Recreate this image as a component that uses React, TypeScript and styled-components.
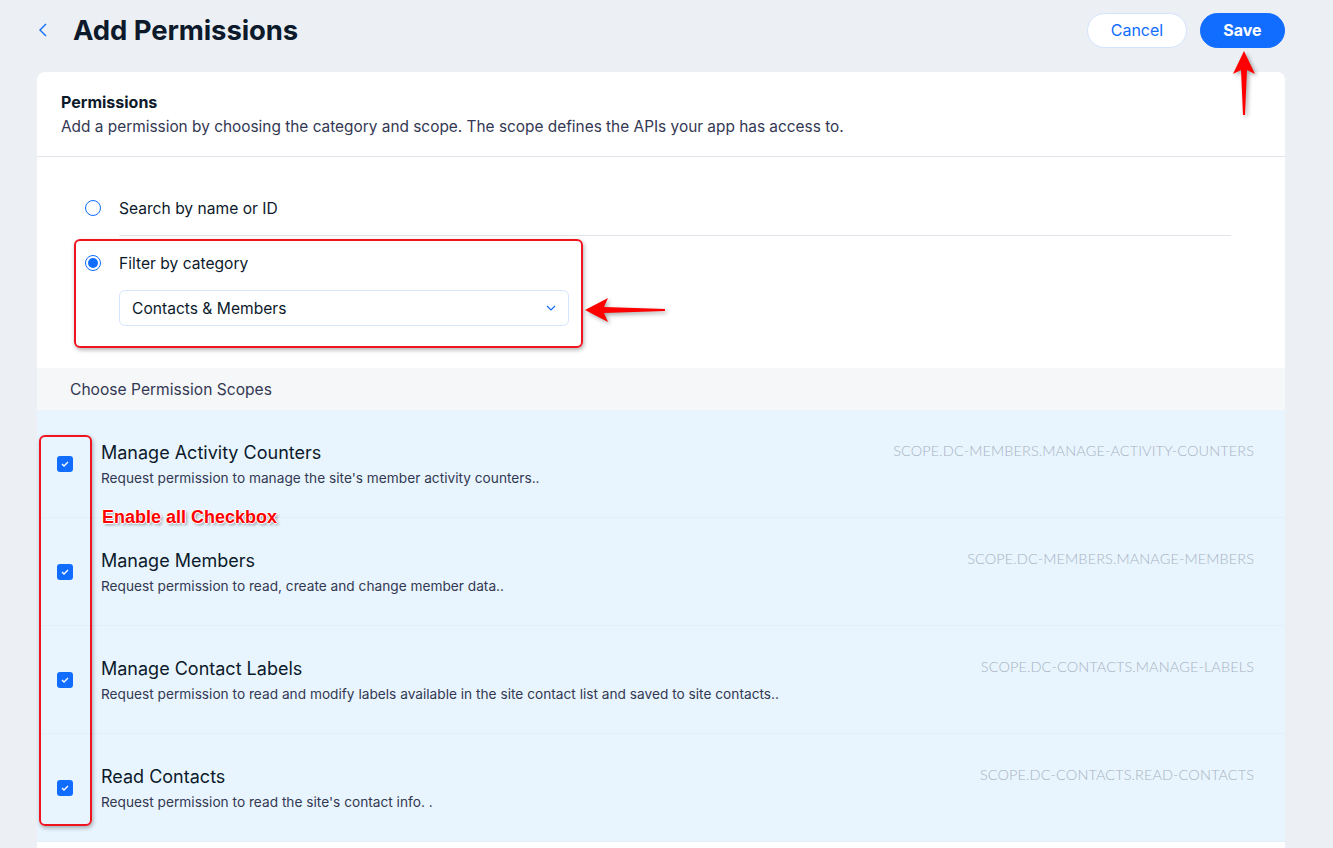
import React from 'react';
import styled, { createGlobalStyle } from 'styled-components';

const GlobalStyle = createGlobalStyle`
  html, body {
    margin: 0;
    padding: 0;
    background: #ecf0f4;
    font-family: Inter, "Noto Sans", sans-serif;
    color: #0c1a2b;
  }
  * { box-sizing: border-box; }
`;

const Page = styled.div`
  position: relative;
  width: 1333px;
  height: 848px;
  overflow: hidden;
  padding: 0 48px 0 37px;
`;

const Header = styled.header`
  display: flex;
  align-items: center;
  height: 60px;
`;

const BackButton = styled.button`
  display: flex;
  align-items: center;
  justify-content: center;
  width: 12px;
  height: 20px;
  padding: 0;
  border: none;
  background: none;
  color: #116dff;
`;

const Title = styled.h1`
  margin: 0 0 0 24px;
  font-size: 27.5px;
  font-weight: 700;
  letter-spacing: -0.1px;
  color: #0c1a2b;
  flex: 1;
`;

const Actions = styled.div`
  display: flex;
  gap: 13px;
`;

const PillButton = styled.button<{ $primary?: boolean }>`
  height: 35px;
  padding: 0 ${(p) => (p.$primary ? '22.5px' : '22.5px')};
  border-radius: 18px;
  font-family: Inter, "Noto Sans", sans-serif;
  font-size: 16px;
  font-weight: ${(p) => (p.$primary ? 700 : 400)};
  border: 1px solid ${(p) => (p.$primary ? '#116dff' : '#d3e3fd')};
  background: ${(p) => (p.$primary ? '#116dff' : '#ffffff')};
  color: ${(p) => (p.$primary ? '#ffffff' : '#116dff')};
`;

const Card = styled.section`
  margin-top: 12px;
  background: #ffffff;
  border-radius: 8px 8px 0 0;
  min-height: 800px;
`;

const CardHeader = styled.div`
  padding: 18px 24px 19px;
  border-bottom: 1px solid #dfe5eb;
`;

const CardTitle = styled.h2`
  margin: 0;
  font-size: 16px;
  line-height: 24px;
  font-weight: 700;
`;

const CardSubtitle = styled.p`
  margin: 3px 0 0;
  font-size: 15.4px;
  line-height: 20px;
  color: #333853;
`;

const Options = styled.div`
  padding: 31px 54px 42px 48px;
`;

const OptionRow = styled.label`
  display: flex;
  align-items: center;
  gap: 18px;
  height: 40px;
  font-size: 15.6px;
  color: #0c1a2b;
`;

const Radio = styled.span<{ $checked?: boolean }>`
  width: 16px;
  height: 16px;
  border-radius: 50%;
  border: 1px solid #116dff;
  display: flex;
  align-items: center;
  justify-content: center;
  background: #ffffff;
  &::after {
    content: '';
    width: 10px;
    height: 10px;
    border-radius: 50%;
    background: ${(p) => (p.$checked ? '#116dff' : 'transparent')};
  }
`;

const Divider = styled.hr`
  margin: 7px 0 7px 34px;
  border: none;
  border-top: 1px solid #dfe5eb;
`;

const Select = styled.div`
  margin: 7px 0 0 34px;
  width: 450px;
  height: 36px;
  border: 1px solid #d6e6fe;
  border-radius: 6px;
  display: flex;
  align-items: center;
  justify-content: space-between;
  padding: 0 12px 0 12px;
  font-size: 15.6px;
  color: #0c1a2b;
`;

const SectionBar = styled.div`
  height: 42px;
  display: flex;
  align-items: center;
  padding-left: 33px;
  background: #f6f7f9;
  font-size: 15.6px;
  color: #333853;
`;

const ScopeList = styled.div`
  background: #e8f5fe;
`;

const ScopeRow = styled.div`
  display: flex;
  height: 108px;
  padding: 31px 31px 0 20px;
  border-bottom: 1px solid #e1eff9;
`;

const Checkbox = styled.span`
  margin-top: 15px;
  width: 16px;
  height: 16px;
  border-radius: 3px;
  background: #116dff;
  display: flex;
  align-items: center;
  justify-content: center;
  flex-shrink: 0;
`;

const ScopeText = styled.div`
  flex: 1;
  margin-left: 28px;
`;

const ScopeTitle = styled.div`
  font-size: 18px;
  line-height: 24px;
  color: #0c1a2b;
`;

const ScopeDesc = styled.div`
  margin-top: 3px;
  font-size: 13.7px;
  line-height: 20px;
  color: #333853;
`;

const ScopeId = styled.div`
  font-family: Lato, "Noto Sans", sans-serif;
  font-weight: 300;
  font-size: 14.5px;
  line-height: 20px;
  color: #a9b3c2;
  letter-spacing: 0.1px;
`;

const RedBox = styled.div`
  position: absolute;
  border: 2px solid #f0141e;
  border-radius: 6px;
  box-shadow: 1px 2px 4px rgba(0, 0, 0, 0.3);
`;

const Note = styled.div`
  position: absolute;
  left: 102px;
  top: 507px;
  font-family: "Liberation Sans", Arial, sans-serif;
  font-weight: 700;
  font-size: 18px;
  color: #ff0000;
  text-shadow: -1px 0 #fff, 1px 0 #fff, 0 -1px #fff, 0 1px #fff, 2px 2px 3px rgba(0, 0, 0, 0.4);
`;

const ArrowSvg = styled.svg`
  position: absolute;
  overflow: visible;
  filter: drop-shadow(2px 2px 2px rgba(0, 0, 0, 0.35));
`;

const scopes = [
  {
    title: 'Manage Activity Counters',
    desc: "Request permission to manage the site's member activity counters..",
    id: 'SCOPE.DC-MEMBERS.MANAGE-ACTIVITY-COUNTERS',
  },
  {
    title: 'Manage Members',
    desc: 'Request permission to read, create and change member data..',
    id: 'SCOPE.DC-MEMBERS.MANAGE-MEMBERS',
  },
  {
    title: 'Manage Contact Labels',
    desc: 'Request permission to read and modify labels available in the site contact list and saved to site contacts..',
    id: 'SCOPE.DC-CONTACTS.MANAGE-LABELS',
  },
  {
    title: 'Read Contacts',
    desc: "Request permission to read the site's contact info. .",
    id: 'SCOPE.DC-CONTACTS.READ-CONTACTS',
  },
];

const App: React.FC = () => {
  return (
    <Page>
      <GlobalStyle />
      <Header>
        <BackButton aria-label="Back">
          <svg width="8" height="14" viewBox="0 0 8 14">
            <path d="M7 1L1 7l6 6" fill="none" stroke="currentColor" strokeWidth="1.4" />
          </svg>
        </BackButton>
        <Title>Add Permissions</Title>
        <Actions>
          <PillButton>Cancel</PillButton>
          <PillButton $primary>Save</PillButton>
        </Actions>
      </Header>

      <Card>
        <CardHeader>
          <CardTitle>Permissions</CardTitle>
          <CardSubtitle>
            Add a permission by choosing the category and scope. The scope defines the APIs your app has access to.
          </CardSubtitle>
        </CardHeader>

        <Options>
          <OptionRow>
            <Radio />
            Search by name or ID
          </OptionRow>
          <Divider />
          <OptionRow>
            <Radio $checked />
            Filter by category
          </OptionRow>
          <Select>
            Contacts &amp; Members
            <svg width="10" height="6" viewBox="0 0 10 6">
              <path d="M1 1l4 4 4-4" fill="none" stroke="#116dff" strokeWidth="1.2" />
            </svg>
          </Select>
        </Options>

        <SectionBar>Choose Permission Scopes</SectionBar>

        <ScopeList>
          {scopes.map((s) => (
            <ScopeRow key={s.id}>
              <Checkbox>
                <svg width="8" height="6" viewBox="0 0 8 6">
                  <path d="M1 3l2 2 4-4" fill="none" stroke="#fff" strokeWidth="1.3" />
                </svg>
              </Checkbox>
              <ScopeText>
                <ScopeTitle>{s.title}</ScopeTitle>
                <ScopeDesc>{s.desc}</ScopeDesc>
              </ScopeText>
              <ScopeId>{s.id}</ScopeId>
            </ScopeRow>
          ))}
        </ScopeList>
      </Card>

      <RedBox style={{ left: 74, top: 239, width: 509, height: 109 }} />
      <RedBox style={{ left: 39, top: 435, width: 53, height: 391 }} />
      <Note>Enable all Checkbox</Note>

      <ArrowSvg style={{ left: 584, top: 296 }} width="82" height="28" viewBox="0 0 82 28">
        <polygon points="1,14 24,2 20,11 81,13 81,15 20,17 24,26" fill="#ff0000" />
      </ArrowSvg>
      <ArrowSvg style={{ left: 1232, top: 50 }} width="24" height="66" viewBox="0 0 24 66">
        <polygon points="12,1 23,24 15,20 13,65 11,65 9,20 1,24" fill="#ff0000" />
      </ArrowSvg>
    </Page>
  );
};

export default App;
